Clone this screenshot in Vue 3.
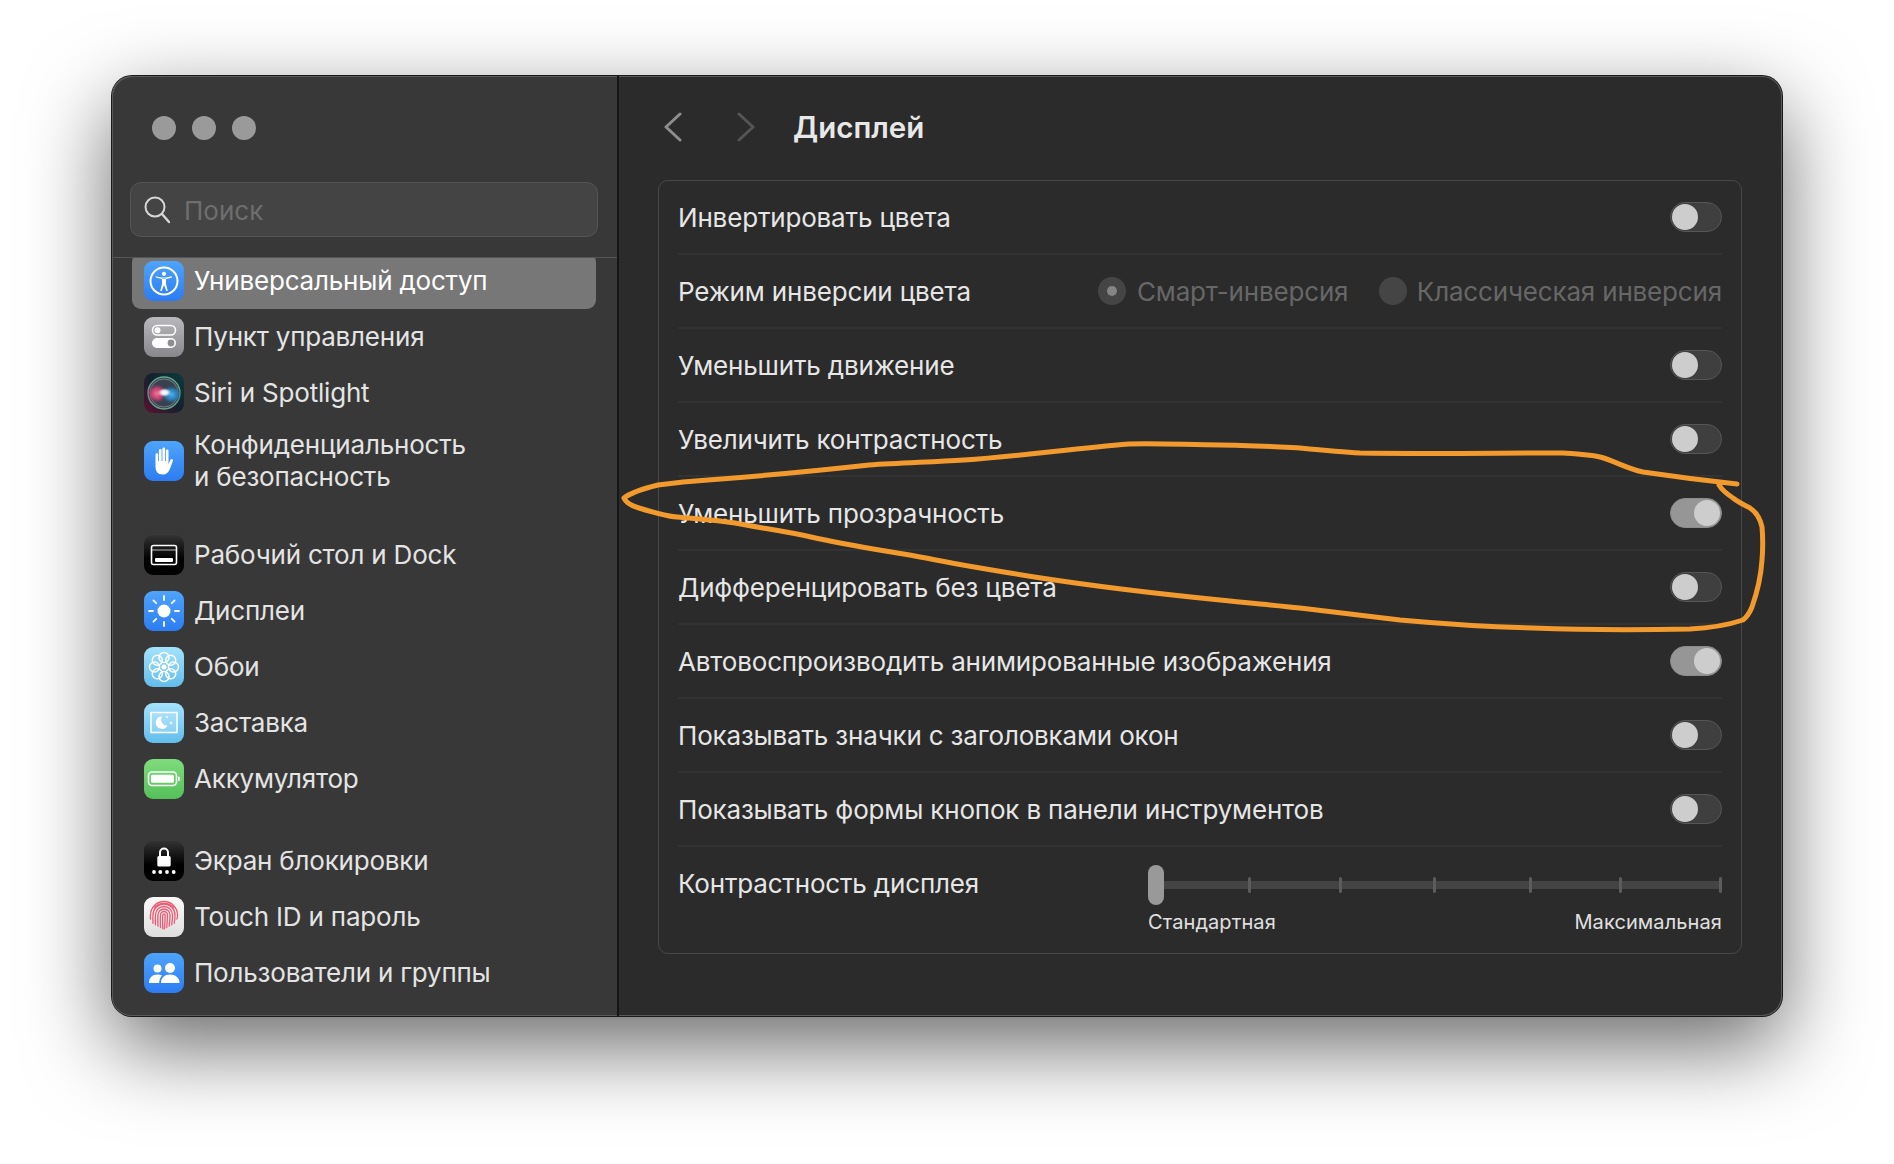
<script setup>
const groups = [
  [
    { id: 'access', label: 'Универсальный доступ', active: true },
    { id: 'control', label: 'Пункт управления' },
    { id: 'siri', label: 'Siri и Spotlight' },
    { id: 'hand', label: 'Конфиденциальность\nи безопасность', tall: true }
  ],
  [
    { id: 'desktop', label: 'Рабочий стол и Dock' },
    { id: 'display', label: 'Дисплеи' },
    { id: 'wallpaper', label: 'Обои' },
    { id: 'saver', label: 'Заставка' },
    { id: 'battery', label: 'Аккумулятор' }
  ],
  [
    { id: 'lock', label: 'Экран блокировки' },
    { id: 'touch', label: 'Touch ID и пароль' },
    { id: 'users', label: 'Пользователи и группы' }
  ]
]

const rows = [
  { label: 'Инвертировать цвета', on: false },
  { label: 'Режим инверсии цвета', radio: true },
  { label: 'Уменьшить движение', on: false },
  { label: 'Увеличить контрастность', on: false },
  { label: 'Уменьшить прозрачность', on: true },
  { label: 'Дифференцировать без цвета', on: false },
  { label: 'Автовоспроизводить анимированные изображения', on: true },
  { label: 'Показывать значки с заголовками окон', on: false },
  { label: 'Показывать формы кнопок в панели инструментов', on: false }
]

const ticks = [1248, 1339, 1433, 1529, 1619, 1719]
const petals = [0, 45, 90, 135, 180, 225, 270, 315]

// дуги отпечатка: сверху полукруг, снизу расходящиеся хвосты
const prints = [13.5, 11, 8.5, 6, 3.5, 1.2].map((r) => {
  const y = 18
  const tail = r > 12 ? 4 : 14.5 - r * 0.55
  return `M${20 - r} ${y + tail}C${20 - r - 0.5} ${y + 2} ${20 - r} ${y + 1} ${20 - r} ${y}A${r} ${r} 0 0 1 ${20 + r} ${y}C${20 + r} ${y + 3} ${20 + r} ${y + 4} ${20 + r - 0.8} ${y + tail}`
})
</script>

<template>
  <div class="page">
    <div class="window">
      <aside class="sidebar">
        <div class="lights"><i></i><i></i><i></i></div>
        <div class="search">
          <svg class="search-icon" width="26" height="28" viewBox="0 0 26 28" fill="none" stroke="#d8d8d8" stroke-width="2">
            <circle cx="11" cy="11" r="9.5" />
            <path d="M18 18l7 8" stroke-linecap="round" stroke-width="2.4" />
          </svg>
          <span class="search-text">Поиск</span>
        </div>
        <div class="list">
          <div class="list-inner">
            <div v-for="(group, i) in groups" :key="i" class="group">
              <div v-for="item in group" :key="item.id" class="item" :class="{ active: item.active, tall: item.tall }">
                <svg class="app-icon" width="40" height="40" viewBox="0 0 40 40">
                  <defs>
                    <linearGradient id="blue" x1="0" y1="0" x2="0" y2="1"><stop offset="0" stop-color="#4fa4fb" /><stop offset="1" stop-color="#2c7cf2" /></linearGradient>
                    <linearGradient id="grey" x1="0" y1="0" x2="0" y2="1"><stop offset="0" stop-color="#b8b8bd" /><stop offset="1" stop-color="#87878c" /></linearGradient>
                    <linearGradient id="sky" x1="0" y1="0" x2="0" y2="1"><stop offset="0" stop-color="#a4e2fd" /><stop offset="1" stop-color="#62bdec" /></linearGradient>
                    <linearGradient id="green" x1="0" y1="0" x2="0" y2="1"><stop offset="0" stop-color="#7fdc7c" /><stop offset="1" stop-color="#55c05a" /></linearGradient>
                    <linearGradient id="black" x1="0" y1="0" x2="0" y2="1"><stop offset="0" stop-color="#333" /><stop offset=".6" stop-color="#000" /><stop offset="1" stop-color="#000" /></linearGradient>
                    <linearGradient id="paper" x1="0" y1="0" x2="0" y2="1"><stop offset="0" stop-color="#fafafa" /><stop offset="1" stop-color="#dedede" /></linearGradient>
                    <linearGradient id="siriBack" x1="1" y1="0" x2="0" y2="1"><stop offset="0" stop-color="#0c3b3e" /><stop offset=".5" stop-color="#15202c" /><stop offset="1" stop-color="#5e0f33" /></linearGradient>
                    <radialGradient id="siriPink"><stop offset="0" stop-color="#ff6f96" /><stop offset=".6" stop-color="#c2406f" stop-opacity=".9" /><stop offset="1" stop-color="#8a2f63" stop-opacity="0" /></radialGradient>
                    <radialGradient id="siriBlue"><stop offset="0" stop-color="#45b4f2" /><stop offset=".6" stop-color="#2a7fb5" stop-opacity=".9" /><stop offset="1" stop-color="#1f5f90" stop-opacity="0" /></radialGradient>
                    <radialGradient id="siriWhite"><stop offset="0" stop-color="#fff" /><stop offset=".45" stop-color="#fff" stop-opacity=".85" /><stop offset="1" stop-color="#cfd8ff" stop-opacity="0" /></radialGradient>
                  </defs>

                  <template v-if="item.id === 'access'">
                    <rect width="40" height="40" rx="9" fill="url(#blue)" />
                    <circle cx="20" cy="20" r="13.5" fill="none" stroke="#fff" stroke-width="2" />
                    <circle cx="20" cy="12.8" r="2.1" fill="#fff" />
                    <path d="M12 16.4l5.5 1.5h5l5.5-1.500-.4-1.200-5.800 1.400h-4.600l-5.800-1.400zM18 17.500h4v5.500l1.800 7h-1.500l-2.300-6-2.300 6h-1.500l1.800-7z" fill="#fff" />
                  </template>

                  <template v-else-if="item.id === 'control'">
                    <rect width="40" height="40" rx="9" fill="url(#grey)" />
                    <rect x="8.5" y="8.5" width="23" height="9.5" rx="4.7" fill="none" stroke="#fff" stroke-width="1.6" />
                    <circle cx="13.5" cy="13.2" r="3" fill="#fff" />
                    <rect x="8" y="21" width="24" height="10" rx="5" fill="#fff" />
                    <circle cx="27" cy="26" r="3.4" fill="#8d8d92" />
                  </template>

                  <template v-else-if="item.id === 'siri'">
                    <rect width="40" height="40" rx="9" fill="url(#siriBack)" />
                    <circle cx="20" cy="20" r="16" fill="#39414f" />
                    <circle cx="20" cy="20" r="16" fill="none" stroke="#6fc6a0" stroke-width="1.3" opacity=".8" />
                    <circle cx="20" cy="20" r="14" fill="none" stroke="#c9dbe0" stroke-width=".8" opacity=".5" />
                    <ellipse cx="13" cy="20.5" rx="10" ry="9.5" fill="url(#siriPink)" />
                    <ellipse cx="27.5" cy="21.5" rx="10" ry="9" fill="url(#siriBlue)" />
                    <ellipse cx="20.5" cy="19.5" rx="7" ry="4.5" fill="url(#siriWhite)" />
                  </template>

                  <template v-else-if="item.id === 'hand'">
                    <rect width="40" height="40" rx="9" fill="url(#blue)" />
                    <path d="M11.5 13.5c0-1.800 2.600-1.800 2.600 0V20h.8V9.300c0-1.800 2.700-1.800 2.700 0V20h.8V7.800c0-1.800 2.700-1.800 2.700 0V20h.8V9.800c0-1.800 2.600-1.800 2.600 0V23l1.800-4c.9-1.900 3.300-.9 2.600 1l-3 8c-1.300 3.500-3.600 5.500-7.200 5.500-4.800 0-7.200-3-7.200-7.500z" fill="#fff" />
                  </template>

                  <template v-else-if="item.id === 'desktop'">
                    <rect width="40" height="40" rx="9" fill="url(#black)" />
                    <rect x="7.5" y="10.5" width="25" height="19" rx="2" fill="none" stroke="#fff" stroke-width="1.6" />
                    <path d="M8 15h24" stroke="#fff" stroke-width="1" opacity=".7" />
                    <rect x="11" y="23" width="18" height="4" rx="1" fill="#fff" />
                  </template>

                  <template v-else-if="item.id === 'display'">
                    <rect width="40" height="40" rx="9" fill="url(#blue)" />
                    <circle cx="20" cy="20" r="6.5" fill="#fff" />
                    <path v-for="r in petals" :key="r" d="M20 5v4" stroke="#fff" stroke-width="1.8" stroke-linecap="round" :transform="`rotate(${r} 20 20)`" />
                  </template>

                  <template v-else-if="item.id === 'wallpaper'">
                    <rect width="40" height="40" rx="9" fill="url(#sky)" />
                    <circle v-for="p in petals" :key="p" cx="20" cy="10.5" r="5" fill="none" stroke="#fff" stroke-width="1.5" :transform="`rotate(${p} 20 20)`" />
                    <circle cx="20" cy="20" r="2.5" fill="#fff" />
                  </template>

                  <template v-else-if="item.id === 'saver'">
                    <rect width="40" height="40" rx="9" fill="url(#sky)" />
                    <rect x="7" y="9.5" width="26" height="20" fill="#ffffff2e" stroke="#fff" stroke-width="1.5" />
                    <path d="M18 13.500a6.200 6.200 0 1 0 5.500 9 6 6 0 0 1-5.500-9z" fill="#fff" />
                    <path d="M27 18l.6 1.400 1.400.6-1.400.6-.6 1.400-.6-1.400-1.400-.6 1.400-.6zM23 12.500l.5 1.100 1.100.5-1.100.5-.5 1.100-.5-1.100-1.100-.5 1.100-.5z" fill="#fff" />
                  </template>

                  <template v-else-if="item.id === 'battery'">
                    <rect width="40" height="40" rx="9" fill="url(#green)" />
                    <rect x="4.5" y="13" width="28" height="13.5" rx="3.5" fill="none" stroke="#fff" stroke-width="1.5" />
                    <rect x="7" y="15.7" width="23" height="8" rx="1.5" fill="#fff" />
                    <rect x="34" y="17.5" width="1.8" height="4.5" rx=".8" fill="#fff" />
                  </template>

                  <template v-else-if="item.id === 'lock'">
                    <rect width="40" height="40" rx="9" fill="url(#black)" />
                    <path d="M16 15v-3.500a4 4 0 0 1 8 0V15" fill="none" stroke="#fff" stroke-width="2" />
                    <rect x="13.3" y="15" width="13.4" height="10.5" rx="1.5" fill="#fff" />
                    <circle v-for="x in [10, 16.3, 23, 29.7]" :key="x" :cx="x" cy="31" r="1.9" fill="#fff" />
                  </template>

                  <template v-else-if="item.id === 'touch'">
                    <rect width="40" height="40" rx="9" fill="url(#paper)" />
                    <path d="M10 10.500a14 14 0 0 1 20 0" fill="none" stroke="#ee5a72" stroke-width="1.2" stroke-linecap="round" />
                    <path v-for="d in prints" :key="d" :d="d" fill="none" stroke="#ee5a72" stroke-width="1.3" stroke-linecap="round" />
                  </template>

                  <template v-else>
                    <rect width="40" height="40" rx="9" fill="url(#blue)" />
                    <circle cx="13.5" cy="15.5" r="4" fill="#fff" />
                    <circle cx="26" cy="15" r="5" fill="#fff" />
                    <path d="M5 30c0-5.500 3.300-8.500 8.500-8.500 1.800 0 3.300.4 4.500 1.100-1.700 1.800-2.700 4.200-2.800 7.400z" fill="#fff" />
                    <path d="M17 30c0-5.500 3.800-8.500 9-8.500s9.500 3 9.500 8.500z" fill="#fff" />
                  </template>
                </svg>
                <span class="item-label">{{ item.label }}</span>
              </div>
            </div>
          </div>
        </div>
      </aside>

      <main class="content">
        <header class="toolbar">
          <svg width="18" height="30" viewBox="0 0 18 30" fill="none" stroke="#8e8e8e" stroke-width="3" stroke-linecap="round" stroke-linejoin="round"><path d="M16 2L2 15l14 13" /></svg>
          <svg class="forward" width="18" height="30" viewBox="0 0 18 30" fill="none" stroke="#555" stroke-width="3" stroke-linecap="round" stroke-linejoin="round"><path d="M2 2l14 13L2 28" /></svg>
          <h1>Дисплей</h1>
        </header>

        <section class="card">
          <div v-for="row in rows" :key="row.label" class="row">
            <span>{{ row.label }}</span>
            <div v-if="row.radio" class="radios">
              <span class="radio picked"><i></i>Смарт-инверсия</span>
              <span class="radio"><i></i>Классическая инверсия</span>
            </div>
            <div v-else class="switch" :class="{ on: row.on }"><i></i></div>
          </div>

          <div class="row slider-row">
            <span class="slider-title">Контрастность дисплея</span>
            <div class="slider">
              <div class="track">
                <i class="thumb"></i>
                <b v-for="t in ticks" :key="t" :style="{ left: t - 1148 + 'px' }"></b>
              </div>
              <div class="scale"><span>Стандартная</span><span>Максимальная</span></div>
            </div>
          </div>
        </section>
      </main>

      <!-- обводка от руки поверх окна -->
      <svg class="scribble" width="1894" height="1164" viewBox="0 0 1894 1164" fill="none">
        <path d="M1737 484C1700 480 1670 476 1643 472C1625 468 1615 461 1600 457C1585 454 1575 454 1563 453C1500 453 1420 454 1360 453C1340 452 1320 450 1300 448C1280 447 1245 445 1220 445C1190 445 1160 443 1129 444C1070 449 1020 456 964 460C930 462 900 463 869 465C815 471 760 476 708 480C690 481 672 483 658 485C642 489 630 493 624 498C626 503 632 506 639 508C652 512 665 516 677 517C698 519 716 520 735 523C760 528 785 531 811 537C850 546 888 551 926 558C965 566 1003 572 1041 578C1100 587 1160 594 1220 600C1247 603 1273 605 1300 608C1333 612 1366 616 1400 620C1444 624 1488 627 1533 628C1585 630 1638 630 1690 629C1710 628 1728 625 1743 620C1748 616 1750 612 1752 607C1758 590 1761 575 1762 560C1763 548 1763 538 1762 527C1760 518 1756 512 1750 508C1744 505 1738 502 1733 498C1727 494 1722 490 1719 485" stroke="#f39a2f" stroke-width="5" stroke-linecap="round" stroke-linejoin="round" />
      </svg>
    </div>
  </div>
</template>

<style>
html, body {
  margin: 0;
  background: #fff;
}
</style>

<style scoped>
.page {
  width: 1894px;
  height: 1164px;
  padding: 76px 112px 148px;
  box-sizing: border-box;
  overflow: hidden;
  font-family: Inter, "Liberation Sans", sans-serif;
  color: #e6e6e6;
}

.window {
  position: relative;
  display: flex;
  height: 940px;
  border-radius: 20px;
  background: #2b2b2b;
  box-shadow: 0 0 0 1px #1a1a1a, inset 0 0 0 1px #5a5a5a, 0 30px 85px rgba(0, 0, 0, 0.6);
}

.sidebar {
  width: 505px;
  flex-shrink: 0;
  display: flex;
  flex-direction: column;
  background: #383838;
  border-right: 2px solid #161616;
  border-radius: 20px 0 0 20px;
  box-shadow: inset 1px 1px 0 #5a5a5a, inset 0 -1px 0 #5a5a5a;
}

.lights {
  display: flex;
  gap: 16px;
  padding: 40px 0 0 40px;
}

.lights i {
  width: 24px;
  height: 24px;
  border-radius: 50%;
  background: #9a9a9a;
}

.search {
  display: flex;
  align-items: center;
  height: 55px;
  margin: 42px 19px 0 18px;
  padding-left: 13px;
  box-sizing: border-box;
  background: #444;
  border: 1px solid #555;
  border-radius: 11px;
  color: #6e6e6e;
  font-size: 26px;
}

.search-icon {
  margin-right: 14px;
}

.search-text {
  padding-top: 2px;
}

.list {
  margin-top: 20px;
  flex: 1;
  min-height: 0;
  overflow: hidden;
  border-top: 1px solid #555;
}

.list-inner {
  margin-top: -5px;
}

.group + .group {
  margin-top: 26px;
}

.item {
  display: flex;
  align-items: center;
  height: 56.1px;
  margin: 0 21px 0 20px;
  padding-left: 12px;
  border-radius: 9px;
  font-size: 26px;
  letter-spacing: -0.2px;
  color: #e4e4e4;
}

.item.tall {
  height: 79.5px;
}

.item.active {
  background: #777;
  color: #fff;
}

.app-icon {
  flex-shrink: 0;
  margin-right: 10px;
}

.item-label {
  white-space: pre-line;
  line-height: 32px;
}

.content {
  flex: 1;
  min-width: 0;
  display: flex;
  flex-direction: column;
  padding: 0 40px 0 39px;
}

.toolbar {
  display: flex;
  align-items: center;
  height: 102px;
  margin-bottom: 2px;
  padding-left: 6px;
}

.forward {
  margin-left: 55px;
}

h1 {
  margin: 0 0 0 38px;
  font-size: 29.5px;
  font-weight: 600;
  color: #e8e8e8;
}

.card {
  padding: 0 19px;
  border: 1px solid #484848;
  border-radius: 10px;
}

.row {
  display: flex;
  align-items: center;
  justify-content: space-between;
  height: 74px;
  box-sizing: border-box;
  border-bottom: 2px solid #333;
  font-size: 26px;
  letter-spacing: -0.17px;
}

.switch {
  position: relative;
  width: 52px;
  height: 30px;
  box-sizing: border-box;
  border: 1px solid #565656;
  border-radius: 15px;
  background: #3f3f3f;
}

.switch i {
  position: absolute;
  left: 1px;
  top: 1px;
  width: 26px;
  height: 26px;
  border-radius: 50%;
  background: #cdcdcd;
}

.switch.on {
  background: #969696;
  border-color: #8c8c8c;
}

.switch.on i {
  left: 23px;
}

.radios {
  display: flex;
  gap: 30.5px;
  color: #676767;
}

.radio {
  display: flex;
  align-items: center;
  gap: 10px;
}

.radio.picked {
  gap: 11px;
}

.radio i {
  display: flex;
  align-items: center;
  justify-content: center;
  width: 28px;
  height: 28px;
  border-radius: 50%;
  background: #454545;
}

.radio.picked i::after {
  content: "";
  width: 10px;
  height: 10px;
  border-radius: 50%;
  background: #858585;
}

.slider-row {
  height: 106px;
  border-bottom: 0;
  align-items: flex-start;
}

.slider-title {
  margin-top: 21px;
}

.slider {
  width: 574px;
  padding-top: 18px;
}

.track {
  position: relative;
  height: 8px;
  margin-top: 16px;
  background: #444;
}

.thumb {
  position: absolute;
  left: 0;
  top: -16px;
  width: 16px;
  height: 40px;
  border-radius: 8px;
  background: #999;
}

.track b {
  position: absolute;
  top: -4px;
  width: 3px;
  height: 16px;
  border-radius: 2px;
  background: #5c5c5c;
}

.scale {
  display: flex;
  justify-content: space-between;
  margin-top: 21px;
  font-size: 20px;
  letter-spacing: 0.1px;
  color: #e0e0e0;
}

.scribble {
  position: absolute;
  left: -112px;
  top: -76px;
  pointer-events: none;
}
</style>
